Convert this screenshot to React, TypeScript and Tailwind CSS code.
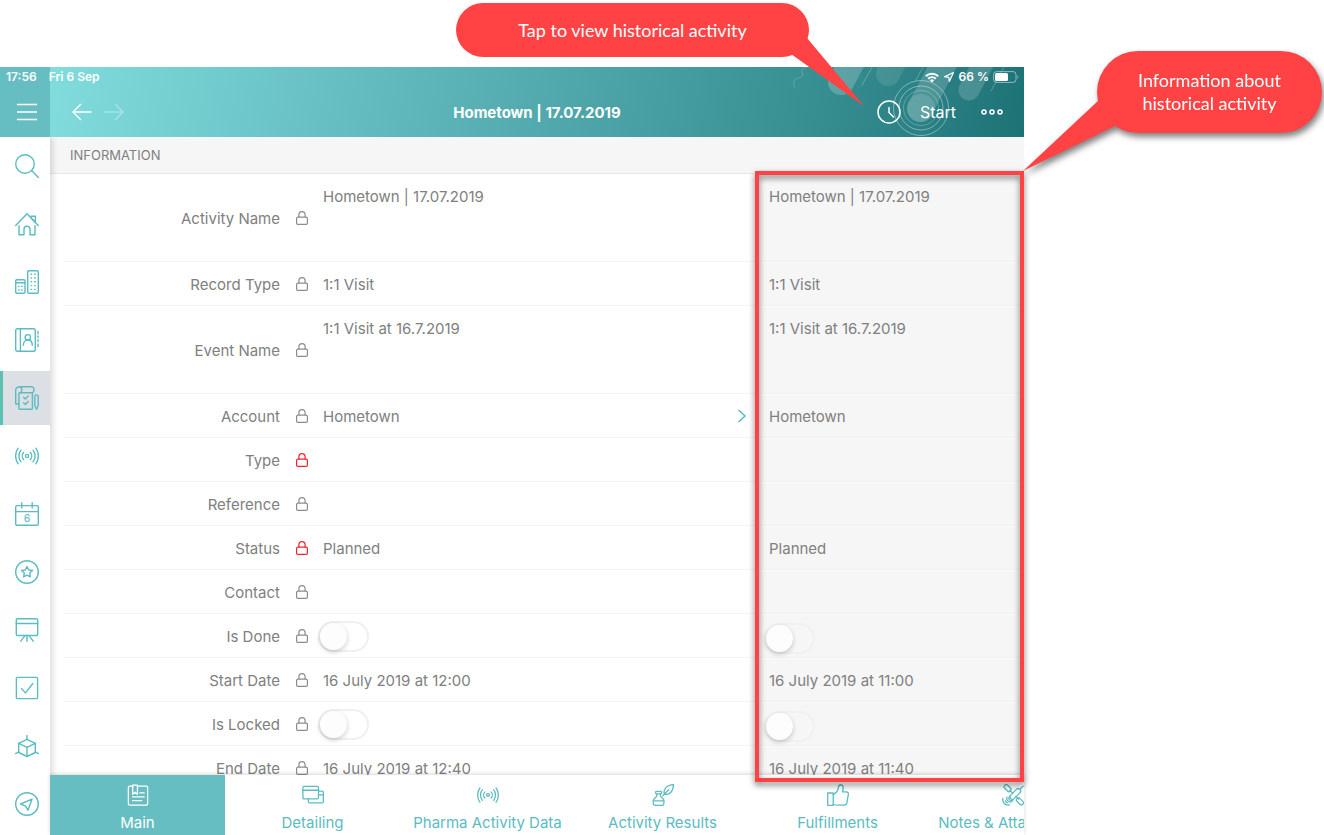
import type { ReactNode } from "react";

type IconProps = { children: ReactNode; className?: string };

function Icon({ children, className = "size-6" }: IconProps) {
  return (
    <svg
      viewBox="0 0 24 24"
      className={className}
      fill="none"
      stroke="currentColor"
      strokeWidth="1.4"
      strokeLinecap="round"
      strokeLinejoin="round"
      aria-hidden="true"
    >
      {children}
    </svg>
  );
}

const broadcast = (
  <>
    <circle cx="12" cy="12" r="1.6" />
    <path d="M8.6 8.6c-1.8 1.9-1.8 4.9 0 6.8M15.4 8.6c1.8 1.9 1.8 4.9 0 6.8" />
    <path d="M5.9 6.2c-2.7 3.3-2.7 8.3 0 11.6M18.1 6.2c2.7 3.3 2.7 8.3 0 11.6" />
    <path d="M3.2 4.2c-3.4 4.6-3.4 11 0 15.6M20.8 4.2c3.4 4.6 3.4 11 0 15.6" />
  </>
);

const navItems: { label: string; active?: boolean; icon: ReactNode }[] = [
  {
    label: "Search",
    icon: (
      <>
        <circle cx="10" cy="10" r="9.3" />
        <path d="M16.8 16.8l6.6 6.6" />
      </>
    ),
  },
  {
    label: "Home",
    icon: (
      <>
        <path d="M.7 13.5L12 1.7l11.3 11.8" />
        <path d="M15.8 4.2h4.5v6.2l-4.5-4.8" />
        <path d="M4 13.8v8.9h5v-5.4a3 3 0 0 1 6 0v5.4h5v-8.9" />
      </>
    ),
  },
  {
    label: "Accounts",
    icon: (
      <>
        <rect x="12.7" y=".7" width="10.6" height="22.6" rx="1.2" />
        <rect x=".7" y="9.7" width="9.3" height="13.6" rx="1.2" />
        <path d="M.7 12.8H10" />
        <path
          d="M16 4.2h.6M19.6 4.2h.6M16 8h.6M19.6 8h.6M16 11.8h.6M19.6 11.8h.6M16 15.6h.6M19.6 15.6h.6M16 19.4h.6M19.6 19.4h.6M3.6 16.4h.6M6.6 16.4h.6M3.6 20h.6M6.6 20h.6"
        />
      </>
    ),
  },
  {
    label: "Contacts",
    icon: (
      <>
        <rect x=".7" y=".7" width="19.6" height="22.6" rx="1.8" />
        <path d="M5.4.7v22.6" />
        <circle cx="12.8" cy="9.3" r="2.7" />
        <path d="M8.3 17.2c0-3.2 1.9-5.2 4.5-5.2s4.5 2 4.500 5.200" />
        <path d="M23 3.2v2.6M23 8v1.4M23 11.6v2M23 16v2.4" />
      </>
    ),
  },
  {
    label: "Activities",
    active: true,
    icon: (
      <>
        <rect x="3.9" y="6.8" width="13.5" height="16.5" rx="1" />
        <path d="M.7 18V4.2A3.5 3.5 0 0 1 4.2.7h12a2.8 2.8 0 0 1 2.8 3c0 1.5-.8 2.6-1.6 3.1M4.2.7a2.9 2.9 0 0 1 2.6 3c0 1.3-.5 2.3-1.2 3.1M.7 18h3.2" />
        <path d="M8.6 11.3l1.8 1.6 2.8-2.8M8.6 16.8l1.8 1.6 2.8-2.8" />
        <path d="M19.8 10.6a1.7 1.7 0 0 1 3.4 0v9.2l-1.7 3.300-1.700-3.300z" />
      </>
    ),
  },
  { label: "Broadcasts", icon: broadcast },
  {
    label: "Calendar",
    icon: (
      <>
        <rect x=".7" y="3.6" width="22.6" height="19.7" rx="1.4" />
        <path d="M.7 9.6h22.600M6.800.7v5.200M17.200.7v5.200" />
        <text
          x="12"
          y="20"
          textAnchor="middle"
          fontSize="10"
          fontFamily="Inter, sans-serif"
          strokeWidth=".2"
          fill="currentColor"
        >
          6
        </text>
      </>
    ),
  },
  {
    label: "Favourites",
    icon: (
      <>
        <circle cx="12" cy="12" r="11.3" />
        <path d="M12 6.500l1.700 3.500 3.800.5-2.800 2.600.7 3.800-3.400-1.800-3.400 1.800.7-3.800-2.800-2.600 3.800-.5z" />
      </>
    ),
  },
  {
    label: "Presentations",
    icon: (
      <>
        <rect x="1.300" y=".7" width="21.400" height="16.800" rx="1.200" />
        <path d="M1.300 5.500h21.400M12 17.500v5.800M9.600 18.200l-3.800 5M14.400 18.200l3.800 5" />
      </>
    ),
  },
  {
    label: "Tasks",
    icon: (
      <>
        <rect x="1.400" y="1.400" width="21.200" height="21.200" rx="1.200" />
        <path d="M6.600 12.600l3.800 4.300 7.400-9.400" />
      </>
    ),
  },
  {
    label: "Products",
    icon: (
      <>
        <path d="M12 5.300l8.300 4v9.200l-8.300 4-8.300-4V9.300z" />
        <path d="M3.700 9.300l8.300 4 8.300-4M12 13.300v9.200M12 1.500v3.800M3.700 17.800L.6 19.600M20.300 17.800l3.100 1.800" />
      </>
    ),
  },
  {
    label: "Nearby",
    icon: (
      <>
        <circle cx="12" cy="12" r="11.300" />
        <path d="M17 7.200L5.600 12l5 2.200 2.300 4z" />
      </>
    ),
  },
];

const tabs: { label: string; active?: boolean; icon: ReactNode }[] = [
  {
    label: "Main",
    active: true,
    icon: (
      <>
        <path d="M6.200 2.300H3a1.500 1.500 0 0 0-1.500 1.500v17.700A1.500 1.500 0 0 0 3 23h18a1.500 1.500 0 0 0 1.500-1.500V3.800A1.500 1.500 0 0 0 21 2.300h-9.600" />
        <path d="M6.200 1.300h5.200v10l-2.600-2.400-2.600 2.400z" />
        <path d="M14 9.700h4.800M6 14h12.800M6 18.200h10" />
      </>
    ),
  },
  {
    label: "Detailing",
    icon: (
      <>
        <rect x="1" y="2.700" width="17" height="13.600" rx="1.300" />
        <path d="M1 6.800h17M18 7.700h4a1.300 1.300 0 0 1 1.300 1.300v10.400a1.300 1.300 0 0 1-1.300 1.300H8.300A1.300 1.300 0 0 1 7 19.400v-3.100M18 11.800h5.300" />
      </>
    ),
  },
  { label: "Pharma Activity Data", icon: broadcast },
  {
    label: "Activity Results",
    icon: (
      <>
        <rect x="4" y="8" width="6.400" height="2.700" rx=".8" />
        <path d="M5.200 10.700v2.800L2.400 16a2.800 2.800 0 0 0-1 2.200v3.200a1.900 1.900 0 0 0 1.900 1.900h7.800a1.900 1.900 0 0 0 1.900-1.900v-3.200a2.800 2.800 0 0 0-1-2.200l-2.800-2.500v-2.800M1.600 18.400h11.200" />
        <path d="M11.700 12.800l6.500-6.600M13.400 11c-1.300-4.400 2.200-10.200 10-10.300.2 7.600-4.800 11.700-10 10.300z" />
      </>
    ),
  },
  {
    label: "Fulfillments",
    icon: (
      <>
        <path d="M.8 9.800h6v13.500h-6z" />
        <path d="M6.800 11.500c2.800-1.500 5.200-3.700 5.600-7.200.2-2 .6-3.500 2.200-3.500 2.200 0 3 1.700 3 3.700 0 1.500-.5 2.700-.8 4h4.300c1.500 0 2.400 1.200 2.200 2.700l-1.600 9.200c-.3 1.700-1.200 2.700-2.800 2.700h-7c-2 0-3.200-.3-5.100-1" />
      </>
    ),
  },
  {
    label: "Notes & Attachments",
    icon: (
      <>
        <rect x="1.800" y="2.300" width="8.600" height="4.400" rx="1.800" transform="rotate(45 6.100 4.500)" />
        <rect x="15.300" y="16.800" width="8.600" height="4.400" rx="1.800" transform="rotate(45 19.600 19)" />
        <rect x="7.500" y="8.200" width="14" height="5.400" rx="2.600" transform="rotate(-45 14.500 10.900)" />
        <path d="M8.400 6.800l3.400 3.400M15 13.200l3 3.200M20.300 5.200l2.700-2.800M8.400 13.200c-1.400 1.400-1.200 3.400 0 4.300 1.200.9 2.700.7 3.800-.4M5.600 14.200c-1.600 2.800 1.800 6.800 5.200 5.200M.9 15.600c-.8 4.600 2.600 8 7.200 7.200M3.600 18.300c.5 1.200 1.200 1.900 2.300 2.300" />
      </>
    ),
  },
];

type Field = {
  label: string;
  current?: string;
  history?: string;
  kind?: "tall" | "toggle" | "link";
  required?: boolean;
};

const fields: Field[] = [
  { label: "Activity Name", current: "Hometown | 17.07.2019", history: "Hometown | 17.07.2019", kind: "tall" },
  { label: "Record Type", current: "1:1 Visit", history: "1:1 Visit" },
  { label: "Event Name", current: "1:1 Visit at 16.7.2019", history: "1:1 Visit at 16.7.2019", kind: "tall" },
  { label: "Account", current: "Hometown", history: "Hometown", kind: "link" },
  { label: "Type", required: true },
  { label: "Reference" },
  { label: "Status", current: "Planned", history: "Planned", required: true },
  { label: "Contact" },
  { label: "Is Done", kind: "toggle" },
  { label: "Start Date", current: "16 July 2019 at 12:00", history: "16 July 2019 at 11:00" },
  { label: "Is Locked", kind: "toggle" },
  { label: "End Date", current: "16 July 2019 at 12:40", history: "16 July 2019 at 11:40" },
];

function Lock({ required }: { required?: boolean }) {
  return (
    <svg
      viewBox="0 0 12 14"
      className={required ? "h-3.5 w-3 text-[#f5222d]" : "h-3.5 w-3 text-[#8c8c8c]"}
      fill="none"
      stroke="currentColor"
      strokeWidth="1.2"
      aria-hidden="true"
    >
      <rect x=".6" y="6.2" width="10.8" height="7.2" rx="1.2" />
      <path d="M2.9 6.2V3.7a3.1 3.1 0 0 1 6.2 0v2.5" />
    </svg>
  );
}

function Toggle({ id, label }: { id: string; label?: string }) {
  return (
    <input
      id={id}
      type="checkbox"
      role="switch"
      aria-label={label}
      className="relative -ml-[5px] h-[31px] w-[51px] appearance-none rounded-full border-2 border-[#f0f0f0] before:absolute before:left-0 before:top-0 before:size-[27px] before:rounded-full before:bg-[#fdfdfd] before:shadow-[0_2px_5px_rgba(0,0,0,0.2)] checked:bg-[#66bec2] checked:before:left-5"
    />
  );
}

function FieldRow({ field }: { field: Field }) {
  const id = field.label.toLowerCase().replace(" ", "-");
  const isToggle = field.kind === "toggle";
  return (
    <div className={field.kind === "tall" ? "flex h-[88px] shrink-0" : "flex h-11 shrink-0"}>
      <div className="flex min-w-0 flex-1 border-b border-[#f3f3f3]">
        <div className="flex w-[216px] items-center justify-end pt-[3px]">
          {isToggle ? <label htmlFor={id}>{field.label}</label> : <span>{field.label}</span>}
        </div>
        <div className="flex items-center pl-4 pr-[15px]">
          <Lock required={field.required} />
        </div>
        <div className={isToggle ? "flex h-11 min-w-0 flex-1 items-center" : "flex h-11 min-w-0 flex-1 items-center pt-0.5"}>
          {isToggle ? <Toggle id={id} /> : field.current}
        </div>
        {field.kind === "link" && (
          <button type="button" aria-label="Open account" className="pr-2.5 text-[#5bbcc1]">
            <svg viewBox="0 0 10 14" className="h-3.5 w-2.5" fill="none" stroke="currentColor" strokeWidth="1.5" aria-hidden="true">
              <path d="M1.500 1l6.500 6-6.500 6" />
            </svg>
          </button>
        )}
      </div>
      <div className="w-[267px] border-b border-[#efefef] bg-[#f6f6f6] pl-3 shadow-[inset_0_1px_0_#fbfbfb]">
        <div className={isToggle ? "flex h-11 items-center pt-1" : "flex h-11 items-center pt-0.5"}>
          {isToggle ? <Toggle id={`${id}-history`} label={`${field.label}, historical`} /> : field.history}
        </div>
      </div>
    </div>
  );
}

function HeaderArt() {
  return (
    <svg viewBox="784 67 240 70" className="absolute right-0 top-0 h-[70px] w-[240px]" fill="none" stroke="#ffffff" aria-hidden="true">
      <path d="M808 67c-4 0-7 2-6 5 1 3 1 4-1 5s-6 1-7 4 0 5 1 7" strokeOpacity=".18" />
      <g strokeLinecap="round">
        <path d="M841 82l14-26" strokeWidth="26" strokeOpacity=".2" />
        <path d="M888 74l8-15" strokeWidth="24" strokeOpacity=".1" />
        <path d="M920 109l28-53" strokeWidth="26" strokeOpacity=".17" />
        <path d="M969 90l18-34" strokeWidth="21" strokeOpacity=".17" />
        <path d="M862 85l10-18M916 80l7-13M991 91l13-24" strokeOpacity=".25" />
      </g>
      <circle cx="921" cy="108" r="14" fill="#ffffff" fillOpacity=".12" stroke="none" />
      <g strokeOpacity=".4">
        <circle cx="921" cy="108" r="17.5" strokeOpacity=".25" />
        <circle cx="921" cy="108" r="22" />
        <circle cx="921" cy="108" r="27.5" />
      </g>
    </svg>
  );
}

function Header() {
  return (
    <header className="relative z-20 h-[70px] overflow-hidden bg-[linear-gradient(100deg,#82dddd_4%,#65bdc1_34%,#378e91_80%,#1d7276_100%)] text-white">
      <div className="absolute inset-y-0 left-0 w-[50px] bg-[#66bec2]" />
      <HeaderArt />
      <div className="relative flex h-5 items-center justify-between pl-1.5 pr-[5px] text-xs font-semibold">
        <div className="flex gap-3">
          <span>17:56</span>
          <span>Fri 6 Sep</span>
        </div>
        <div className="flex items-center gap-1">
          <svg viewBox="0 0 14 11" className="h-[11px] w-3.5" fill="none" stroke="currentColor" strokeWidth="2" aria-label="Wi-Fi">
            <path d="M.8 4.200a9 9 0 0 1 12.400 0M3.200 6.700a5.600 5.600 0 0 1 7.600 0" />
            <path d="M7 10.600L4.900 8.400a3 3 0 0 1 4.200 0z" fill="currentColor" stroke="none" />
          </svg>
          <svg viewBox="0 0 12 12" className="size-3" fill="none" stroke="currentColor" strokeWidth="1.2" strokeLinejoin="round" aria-label="Location">
            <path d="M10.500 1.500L1.500 5.700l4.300.6.500 4.200z" />
          </svg>
          <span>66 %</span>
          <svg viewBox="0 0 26 12" className="h-3 w-[26px]" aria-label="Battery">
            <rect x=".6" y=".6" width="22.4" height="10.8" rx="3" fill="none" stroke="#ffffff" strokeOpacity=".5" />
            <rect x="2" y="2" width="13" height="8" rx="1.5" fill="#ffffff" />
            <path d="M24.500 4.200v3.600c1.200-.6 1.200-3 0-3.600z" fill="#ffffff" fillOpacity=".5" />
          </svg>
        </div>
      </div>
      <div className="relative flex h-[50px] items-center">
        <button type="button" aria-label="Menu" className="flex w-[50px] justify-center pl-1">
          <svg viewBox="0 0 20 18" className="h-[18px] w-5" stroke="currentColor" strokeWidth="1.5" aria-hidden="true">
            <path d="M0 1.500h20M0 9h20M0 16.500h20" />
          </svg>
        </button>
        <div className="grid flex-1 grid-cols-[1fr_auto_1fr] items-center">
          <div className="flex gap-3 pl-[22px]">
            <button type="button" aria-label="Back">
              <svg viewBox="0 0 20 18" className="h-[18px] w-5" fill="none" stroke="currentColor" strokeWidth="1.5" aria-hidden="true">
                <path d="M19.500 9H1M9 1L1 9l8 8" />
              </svg>
            </button>
            <button type="button" aria-label="Forward" disabled className="opacity-35">
              <svg viewBox="0 0 20 18" className="h-[18px] w-5" fill="none" stroke="currentColor" strokeWidth="1.5" aria-hidden="true">
                <path d="M.5 9H19M11 1l8 8-8 8" />
              </svg>
            </button>
          </div>
          <h1 className="pt-0.5 text-[15px] font-bold">Hometown | 17.07.2019</h1>
          <div className="flex items-center justify-end pr-[21px]">
            <button type="button" aria-label="Historical activity">
              <svg viewBox="0 0 24 24" className="size-6" fill="none" stroke="currentColor" strokeWidth="1.5" strokeLinecap="round" aria-hidden="true">
                <circle cx="12" cy="12" r="11" />
                <path d="M12 7.500v5l4.500 4.500" />
              </svg>
            </button>
            <button type="button" className="pl-[19px] text-base">
              Start
            </button>
            <button type="button" aria-label="More" className="pl-[25px]">
              <svg viewBox="0 0 22 6" className="h-1.5 w-[22px]" fill="none" stroke="currentColor" strokeWidth="1.5" aria-hidden="true">
                <circle cx="3" cy="3" r="2" />
                <circle cx="11" cy="3" r="2" />
                <circle cx="19" cy="3" r="2" />
              </svg>
            </button>
          </div>
        </div>
      </div>
    </header>
  );
}

function SideNav() {
  return (
    <nav
      aria-label="Modules"
      className="relative z-10 flex w-[50px] shrink-0 flex-col gap-1 bg-white pt-0.5 shadow-[1px_0_8px_rgba(0,0,0,0.2)]"
    >
      {navItems.map((item) => (
        <button
          key={item.label}
          type="button"
          aria-label={item.label}
          className={
            item.active
              ? "flex h-[54px] w-full shrink-0 items-center justify-center border-l-3 border-[#5cc1b3] bg-[#dcdfe3] pl-px text-[#5bbcc1]"
              : "flex h-[54px] w-full shrink-0 items-center justify-center pl-1 text-[#5bbcc1]"
          }
        >
          <Icon>{item.icon}</Icon>
        </button>
      ))}
    </nav>
  );
}

function TabBar() {
  return (
    <nav
      aria-label="Activity sections"
      className="relative z-10 flex h-[60px] shrink-0 overflow-x-auto overflow-y-hidden bg-white [scrollbar-width:none]"
    >
      {tabs.map((tab) => (
        <button
          key={tab.label}
          type="button"
          className={
            tab.active
              ? "flex w-[175px] shrink-0 flex-col items-center gap-[5px] bg-[#66bec2] pt-[9px] text-[15px] text-white"
              : "flex w-[175px] shrink-0 flex-col items-center gap-[5px] pt-[9px] text-[15px] text-[#5bbcc1]"
          }
        >
          <Icon>{tab.icon}</Icon>
          <span className="whitespace-nowrap">{tab.label}</span>
        </button>
      ))}
    </nav>
  );
}

export default function App() {
  return (
    <div className="relative flex h-screen flex-col overflow-hidden bg-white pr-[300px] pt-[67px] font-['Inter',sans-serif] text-[15px] leading-6 text-[#808080]">
      <Header />
      <div className="flex min-h-0 flex-1">
        <SideNav />
        <main className="relative flex min-w-0 flex-1 flex-col">
          <h2 className="flex h-[37px] shrink-0 items-center border-b border-[#e6e6e6] bg-[#f6f6f6] pl-5 text-[13px]">
            INFORMATION
          </h2>
          <div className="flex min-h-0 flex-1 flex-col overflow-y-auto overflow-x-hidden pl-3.5 [scrollbar-width:none]">
            {fields.map((field) => (
              <FieldRow key={field.label} field={field} />
            ))}
          </div>
          <div className="z-10 shadow-[0_-1px_4px_rgba(0,0,0,0.16)]">
            <TabBar />
          </div>
          <div className="pointer-events-none absolute bottom-[53px] right-0 top-[34px] z-20 w-[269px] border-4 border-[#ff4345] drop-shadow-[0_3px_3px_rgba(0,0,0,0.55)]" />
        </main>
      </div>

      <aside className="absolute right-[515px] top-[3px] z-30 flex h-[54px] w-[353px] items-center justify-center rounded-full bg-[#ff4345] font-['Lato',sans-serif] text-lg text-white">
        <svg viewBox="0 0 76 70" className="absolute left-[333px] top-[34px] h-[70px] w-[76px]" fill="#ff4345" aria-hidden="true">
          <path d="M18 1L75 69 2 17z" />
        </svg>
        <p className="relative">Tap to view historical activity</p>
      </aside>

      <aside className="absolute right-0.5 top-[51px] z-30 flex h-[82px] w-[225px] items-center justify-center rounded-full bg-[#ff4345] text-center font-['Lato',sans-serif] text-lg leading-[23px] text-white drop-shadow-[2px_4px_3px_rgba(0,0,0,0.5)]">
        <svg viewBox="0 0 104 76" className="absolute -left-[74px] top-[45px] h-[76px] w-[104px]" fill="#ff4345" aria-hidden="true">
          <path d="M76 4L0 75l94-46z" />
        </svg>
        <p className="relative">
          Information about
          <br />
          historical activity
        </p>
      </aside>
    </div>
  );
}
